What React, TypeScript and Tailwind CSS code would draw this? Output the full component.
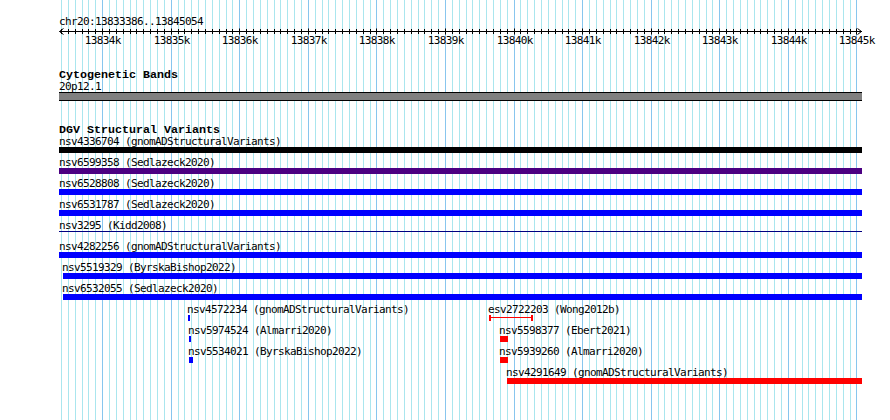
import React from "react";

const ORIGIN = 13833386;
const SCALE = 0.06858;
const X0 = 60;
const bpx = (bp: number) => X0 + (bp - ORIGIN) * SCALE;

type Kind = "bar" | "line" | "range";
type Feat = { label: string; lx: number; bx: number; bw: number; kind: Kind; color: string };

const COLOR: Record<string, string> = {
  black: "bg-black",
  purple: "bg-[#4b0082]",
  blue: "bg-[#0000ff]",
  navy: "bg-[#000080]",
  red: "bg-[#ff0000]",
};

const full = (label: string, color: string, kind: Kind = "bar"): Feat => ({ label, lx: 59, bx: 59, bw: 803, kind, color });

const ROWS: Feat[][] = [
  [full("nsv4336704 (gnomADStructuralVariants)", "black")],
  [full("nsv6599358 (Sedlazeck2020)", "purple")],
  [full("nsv6528808 (Sedlazeck2020)", "blue")],
  [full("nsv6531787 (Sedlazeck2020)", "blue")],
  [full("nsv3295 (Kidd2008)", "navy", "line")],
  [full("nsv4282256 (gnomADStructuralVariants)", "blue")],
  [{ label: "nsv5519329 (ByrskaBishop2022)", lx: 62, bx: 63, bw: 799, kind: "bar", color: "blue" }],
  [{ label: "nsv6532055 (Sedlazeck2020)", lx: 62, bx: 63, bw: 799, kind: "bar", color: "blue" }],
  [
    { label: "nsv4572234 (gnomADStructuralVariants)", lx: 187, bx: 188, bw: 2, kind: "bar", color: "blue" },
    { label: "esv2722203 (Wong2012b)", lx: 488, bx: 489, bw: 44, kind: "range", color: "red" },
  ],
  [
    { label: "nsv5974524 (Almarri2020)", lx: 188, bx: 189, bw: 2, kind: "bar", color: "blue" },
    { label: "nsv5598377 (Ebert2021)", lx: 499, bx: 500, bw: 8, kind: "bar", color: "red" },
  ],
  [
    { label: "nsv5534021 (ByrskaBishop2022)", lx: 188, bx: 189, bw: 4, kind: "bar", color: "blue" },
    { label: "nsv5939260 (Almarri2020)", lx: 499, bx: 500, bw: 8, kind: "bar", color: "red" },
  ],
  [{ label: "nsv4291649 (gnomADStructuralVariants)", lx: 506, bx: 507, bw: 355, kind: "bar", color: "red" }],
];

const SMALL = "font-['DejaVu_Sans_Mono',monospace] text-[11px] leading-[11px] tracking-[-0.62px] text-black whitespace-nowrap";
const BOLD = "font-['Liberation_Mono',monospace] font-bold text-[11.67px] leading-[11px] text-black whitespace-nowrap";

function Grid() {
  const lines: React.ReactNode[] = [];
  for (let bp = 13833400; bp <= 13845000; bp += 100) {
    const x = Math.round(bpx(bp)) + 0.5;
    const major = bp % 1000 === 0;
    lines.push(
      <line key={bp} x1={x} x2={x} y1={0} y2={420} stroke={major ? "#88c6ee" : "#aae6ee"} strokeWidth={1} />
    );
  }
  return (
    <svg className="absolute inset-0" width={890} height={420}>
      {lines}
    </svg>
  );
}

function Ruler() {
  const ticks: React.ReactNode[] = [];
  const labels: React.ReactNode[] = [];
  for (let bp = 13833400; bp <= 13845000; bp += 100) {
    const x = Math.round(bpx(bp)) + 0.5;
    const major = bp % 1000 === 0;
    ticks.push(<line key={bp} x1={x} x2={x} y1={major ? 1.5 : 2} y2={major ? 7.5 : 7} stroke="black" strokeWidth={1} />);
    if (major) {
      labels.push(
        <text
          key={"t" + bp}
          x={x + 0.3}
          y={17}
          textAnchor="middle"
          fontFamily="'DejaVu Sans Mono', monospace"
          fontSize={11}
          letterSpacing={-0.62}
          fill="black"
        >
          {bp / 1000 + "k"}
        </text>
      );
    }
  }
  return (
    <svg className="block" width={890} height={20}>
      <line x1={59.5} x2={862} y1={4.5} y2={4.5} stroke="black" strokeWidth={1} />
      <polyline points="63.5,1.5 59.5,4.5 63.5,7.5" fill="none" stroke="black" strokeWidth={1} />
      <polyline points="857.5,1.5 861.5,4.5 857.5,7.5" fill="none" stroke="black" strokeWidth={1} />
      {ticks}
      {labels}
    </svg>
  );
}

function Glyph({ f }: { f: Feat }) {
  if (f.kind === "line") {
    return (
      <div className="h-[6px]" style={{ width: f.bw }}>
        <div className={"h-px " + COLOR[f.color]} />
      </div>
    );
  }
  if (f.kind === "range") {
    return (
      <svg className="block" width={f.bw} height={6}>
        <rect x={0} y={0} width={2} height={6} fill="#ff0000" />
        <rect x={f.bw - 2} y={0} width={2} height={6} fill="#ff0000" />
        <rect x={0} y={2} width={f.bw} height={1} fill="#ff0000" />
      </svg>
    );
  }
  return <div className={"h-[6px] " + COLOR[f.color]} style={{ width: f.bw }} />;
}

function Row({ feats }: { feats: Feat[] }) {
  return (
    <div className="relative h-[21px]">
      {feats.map((f) => (
        <div key={f.label} className="absolute top-0 flex flex-col items-start" style={{ left: f.bx }}>
          <div className={SMALL + " h-[11px]"} style={{ marginLeft: f.lx - f.bx }}>
            {f.label}
          </div>
          <Glyph f={f} />
        </div>
      ))}
    </div>
  );
}

export default function App() {
  return (
    <div className="relative w-[890px] h-[420px] overflow-hidden bg-white">
      <Grid />
      <div className="relative flex flex-col pt-[16px]">
        <div className={SMALL + " h-[11px] ml-[59px]"}>chr20:13833386..13845054</div>
        <Ruler />
        <div className={BOLD + " h-[11px] mt-[23px] ml-[59px]"}>Cytogenetic Bands</div>
        <div className={SMALL + " h-[11px] ml-[59px]"}>20p12.1</div>
        <div className="h-[9px] w-[803px] ml-[59px] border-y border-black bg-[#808080]" />
        <div className={BOLD + " h-[11px] mt-[24px] ml-[59px]"}>DGV Structural Variants</div>
        {ROWS.map((r, i) => (
          <Row key={i} feats={r} />
        ))}
      </div>
    </div>
  );
}
